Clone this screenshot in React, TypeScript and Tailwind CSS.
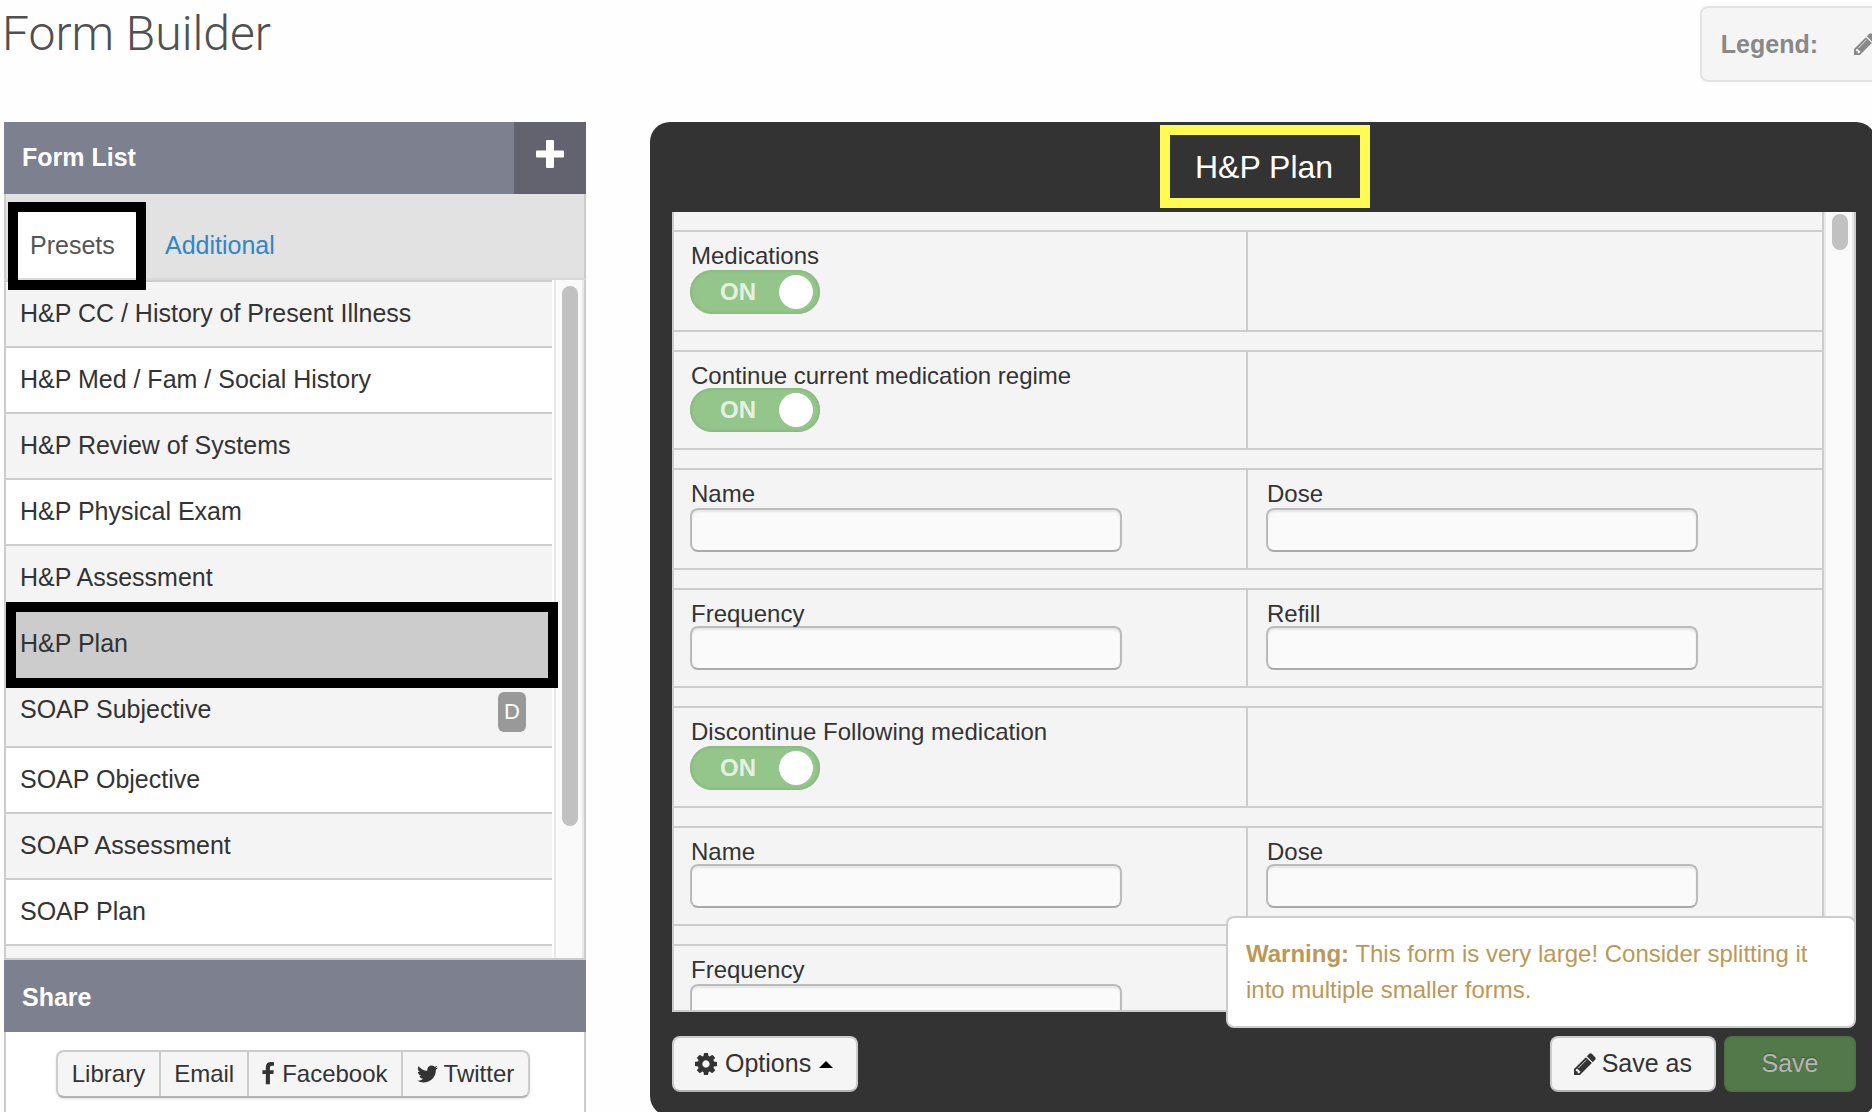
import React, { useId, useState } from "react";

type IconProps = { className?: string };

function PlusIcon({ className }: IconProps) {
  return (
    <svg viewBox="0 0 28 28" className={className} fill="currentColor" aria-hidden="true">
      <path d="M11 0h6a1 1 0 0 1 1 1v9.500H27a1 1 0 0 1 1 1v5a1 1 0 0 1-1 1h-9V27a1 1 0 0 1-1 1h-6a1 1 0 0 1-1-1v-9.500H1a1 1 0 0 1-1-1v-5a1 1 0 0 1 1-1h9V1a1 1 0 0 1 1-1z" />
    </svg>
  );
}

function CogIcon({ className }: IconProps) {
  return (
    <svg viewBox="0 0 1536 1792" className={className} fill="currentColor" aria-hidden="true">
      <path d="M1024 896q0-106-75-181t-181-75-181 75-75 181 75 181 181 75 181-75 75-181zm512-109v222q0 12-8 23t-20 13l-185 28q-19 54-39 91 35 50 107 138 10 12 10 25t-9 23q-27 37-99 108t-94 71q-12 0-26-9l-138-108q-44 23-91 38-16 136-29 186-7 28-36 28h-222q-14 0-24.500-8.500t-11.500-21.500l-28-184q-49-16-90-37l-141 107q-10 9-25 9-14 0-25-11-126-114-165-168-7-10-7-23 0-12 8-23 15-21 51-66.500t54-70.500q-27-50-41-99l-183-27q-13-2-21-12.500t-8-23.500v-222q0-12 8-23t19-13l186-28q14-46 39-92-40-57-107-138-10-12-10-24 0-10 9-23 26-36 98.500-107.500t94.500-71.500q13 0 26 10l138 107q44-23 91-38 16-136 29-186 7-28 36-28h222q14 0 24.500 8.500t11.500 21.500l28 184q49 16 90 37l142-107q9-9 24-9 13 0 25 10 129 119 165 170 7 8 7 22 0 12-8 23-15 21-51 66.500t-54 70.500q26 50 41 98l183 28q13 2 21 12.500t8 23.500z" />
    </svg>
  );
}

function PencilIcon({ className }: IconProps) {
  return (
    <svg viewBox="128 0 1536 1792" className={className} fill="currentColor" aria-hidden="true">
      <path d="M491 1536l91-91-235-235-91 91v107h128v128h107zm523-928q0-22-22-22-10 0-17 7l-542 542q-7 7-7 17 0 22 22 22 10 0 17-7l542-542q7-7 7-17zm-54-192l416 416-832 832h-416v-416zm683 96q0 53-37 90l-166 166-416-416 166-165q36-38 90-38 53 0 91 38l235 234q37 39 37 91z" />
    </svg>
  );
}

function FacebookIcon({ className }: IconProps) {
  return (
    <svg viewBox="448 0 896 1792" className={className} fill="currentColor" aria-hidden="true">
      <path d="M1343 12v264h-157q-86 0-116 36t-30 108v189h293l-39 296h-254v759h-306v-759h-255v-296h255v-218q0-186 104-288.500t277-102.500q147 0 228 12z" />
    </svg>
  );
}

function TwitterIcon({ className }: IconProps) {
  return (
    <svg viewBox="108 0 1577 1792" className={className} fill="currentColor" aria-hidden="true">
      <path d="M1684 408q-67 98-162 167 1 14 1 42 0 130-38 259.500t-115.500 248.500-184.500 210.500-258 146-323 54.500q-271 0-496-145 35 4 78 4 225 0 401-138-105-2-188-64.500t-114-159.500q33 5 61 5 43 0 85-11-112-23-185.500-111.500t-73.500-205.500v-4q68 38 146 41-66-44-105-115t-39-154q0-88 44-163 121 149 294.500 238.500t371.500 99.500q-8-38-8-74 0-134 94.500-228.500t228.500-94.500q140 0 236 102 109-21 205-78-37 115-142 178 93-10 186-50z" />
    </svg>
  );
}

const forms = [
  { name: "H&P CC / History of Present Illness" },
  { name: "H&P Med / Fam / Social History" },
  { name: "H&P Review of Systems" },
  { name: "H&P Physical Exam" },
  { name: "H&P Assessment" },
  { name: "H&P Plan" },
  { name: "SOAP Subjective", badge: "D" },
  { name: "SOAP Objective" },
  { name: "SOAP Assessment" },
  { name: "SOAP Plan" },
  { name: "" },
];

function FormList() {
  const selected = "H&P Plan";
  return (
    <div className="relative flex min-h-0 flex-1 overflow-hidden border-x-2 border-b-2 border-[#ccc] bg-white">
      <ul className="relative z-10 mr-0.5 min-w-0 flex-1">
        {forms.map((form) => (
          <li
            key={form.name}
            className={
              form.name === selected
                ? "relative z-10 border-t-2 border-[#ccc] bg-[#ccc]"
                : "relative border-t-2 border-[#ccc] odd:bg-[#f4f4f4]"
            }
          >
            <button type="button" className="flex w-full pl-3.5 text-left leading-[62px]">
              <span className="min-h-16 flex-1">{form.name}</span>
              {form.badge && (
                <span className="mt-3.5 mr-[26px] mb-3.5 h-10 w-7 rounded-md bg-[#999] text-center text-[22px] leading-10 text-white">
                  {form.badge}
                </span>
              )}
            </button>
            {form.name === selected && (
              <span className="pointer-events-none absolute -top-2.5 -right-1.5 -bottom-3 left-0 border-[10px] border-black" />
            )}
          </li>
        ))}
      </ul>
      <div className="w-[30px] border-x-2 border-[#e8e8e8] bg-[#fafafa] pt-1.5 pl-1.5">
        <div className="h-[540px] w-4 rounded-full bg-[#c1c1c1]" />
      </div>
    </div>
  );
}

function Sidebar() {
  return (
    <aside className="flex w-[582px] shrink-0 flex-col text-[25px] text-[#333]">
      <div className="flex h-[72px] shrink-0 bg-[#7d808f] text-white">
        <h2 className="flex-1 pl-[18px] font-bold leading-[70px]">Form List</h2>
        <button
          type="button"
          aria-label="Add form"
          className="flex w-[72px] justify-center bg-[#62636f] pt-[18px]"
        >
          <PlusIcon className="size-7" />
        </button>
      </div>

      <div className="relative z-20 flex h-[86px] shrink-0 items-end border-x-2 border-b-2 border-[#ccc] border-b-[#d9d9d9] bg-[#e2e2e2]">
        <div className="relative ml-2 h-[66px] w-[124px]">
          <button
            type="button"
            className="h-full w-full rounded-t-md bg-white pl-4 pt-0.5 text-left text-[#555]"
          >
            Presets
          </button>
          <span className="pointer-events-none absolute -top-2.5 -right-2 -bottom-3 -left-1.5 border-[10px] border-black" />
        </div>
        <button type="button" className="h-[66px] px-[27px] pt-0.5 text-[#3186c8]">
          Additional
        </button>
      </div>

      <FormList />

      <h2 className="h-[72px] shrink-0 bg-[#7d808f] pl-[18px] font-bold leading-[74px] text-white">
        Share
      </h2>
      <div className="flex h-20 shrink-0 items-start justify-center border-x-2 border-[#ccc] bg-white pt-[18px] pr-1">
        <div className="flex rounded-lg border-2 border-[#ccc] border-b-[#b3b3b3] bg-[#f5f5f5] text-2xl shadow-sm">
          <button type="button" className="flex h-11 items-center border-r-2 border-[#ccc] px-3.5">
            Library
          </button>
          <button type="button" className="flex h-11 items-center border-r-2 border-[#ccc] px-[13px]">
            Email
          </button>
          <button type="button" className="flex h-11 items-center gap-2 border-r-2 border-[#ccc] px-[13px]">
            <FacebookIcon className="h-6 w-3" />
            Facebook
          </button>
          <button type="button" className="flex h-11 items-center gap-1.5 px-3.5">
            <TwitterIcon className="h-6 w-[21px]" />
            Twitter
          </button>
        </div>
      </div>
    </aside>
  );
}

type Field = { kind: "toggle" | "text"; label: string };

const rows: Field[][] = [
  [{ kind: "toggle", label: "Medications" }],
  [{ kind: "toggle", label: "Continue current medication regime" }],
  [
    { kind: "text", label: "Name" },
    { kind: "text", label: "Dose" },
  ],
  [
    { kind: "text", label: "Frequency" },
    { kind: "text", label: "Refill" },
  ],
  [{ kind: "toggle", label: "Discontinue Following medication" }],
  [
    { kind: "text", label: "Name" },
    { kind: "text", label: "Dose" },
  ],
  [{ kind: "text", label: "Frequency" }],
];

function Toggle({ id }: { id: string }) {
  const [on, setOn] = useState(true);
  return (
    <span className="relative flex h-11 w-[130px] items-center justify-between rounded-full bg-[#94c58b] pr-[7px] pl-[30px] shadow-[inset_0_0_3px_1px_#84b37b]">
      <input
        id={id}
        type="checkbox"
        checked={on}
        onChange={() => setOn(!on)}
        className="absolute inset-0 z-10 cursor-pointer opacity-0"
      />
      <span className="font-bold text-[#e4f1e2]">{on ? "ON" : "OFF"}</span>
      <span className="size-[34px] rounded-full bg-white" />
    </span>
  );
}

function FieldCell({ field }: { field?: Field }) {
  const id = useId();
  return (
    <div className="pt-2 pl-4 last:border-l-2 last:border-[#ccc] last:pl-[18px]">
      {field && (
        <>
          <label
            htmlFor={id}
            className="block w-fit px-px leading-8 group-odd:h-[30px] group-even:h-7"
          >
            {field.label}
          </label>
          {field.kind === "toggle" ? (
            <Toggle id={id} />
          ) : (
            <input
              id={id}
              type="text"
              className="block h-11 w-[432px] max-w-full rounded-lg border-2 border-[#bbb] border-b-[#aaa] bg-[#fafafa] px-3 shadow-[inset_0_2px_2px_#e6e6e6]"
            />
          )}
        </>
      )}
    </div>
  );
}

function FormCanvas() {
  return (
    <div className="ml-[22px] mr-5 flex min-h-0 flex-1 overflow-hidden border-r-2 border-b-2 border-[#ccc]">
      <div className="flex min-w-0 flex-1 flex-col gap-[18px] border-x-2 border-[#ccc] bg-[#f4f4f4] pt-[18px] text-2xl text-[#333]">
        {rows.map((fields, i) => (
          <div
            key={i}
            className="group grid shrink-0 grid-cols-[minmax(0,1fr)_576px] border-y-2 border-[#ccc] odd:h-[102px] even:h-[100px]"
          >
            <FieldCell field={fields[0]} />
            <FieldCell field={fields[1]} />
          </div>
        ))}
      </div>
      <div className="w-[30px] border-x-2 border-[#e8e8e8] bg-[#fafafa] pt-0.5 pl-1.5">
        <div className="h-9 w-4 rounded-full bg-[#c1c1c1]" />
      </div>
    </div>
  );
}

function Editor() {
  return (
    <section className="-mr-1 -mb-1 flex min-w-0 flex-1 flex-col rounded-[20px] bg-[#333] text-[25px] text-[#333]">
      <div className="flex h-[90px] shrink-0 justify-center pt-[3px] pl-1">
        <h2 className="h-[83px] border-[10px] border-[#fffb53] pr-[27px] pl-[25px] text-[32px] leading-[64px] text-white">
          H&amp;P Plan
        </h2>
      </div>
      <FormCanvas />
      <div className="relative flex shrink-0 items-center gap-2 py-6 pr-5 pl-[22px]">
        <button
          type="button"
          className="mr-auto flex h-14 items-center gap-2 rounded-lg border-2 border-[#ccc] border-b-[#b3b3b3] bg-[#f5f5f5] pr-[23px] pl-[21px]"
        >
          <CogIcon className="h-[26px] w-[22px]" />
          Options
          <svg viewBox="0 0 14 7" className="h-[7px] w-3.5 fill-black" aria-hidden="true">
            <path d="M7 0l7 7H0z" />
          </svg>
        </button>
        <button
          type="button"
          className="flex h-14 items-center gap-1.5 rounded-lg border-2 border-[#ccc] border-b-[#b3b3b3] bg-[#f5f5f5] px-[22px]"
        >
          <PencilIcon className="h-[26px] w-[22px]" />
          Save as
        </button>
        <button
          type="button"
          disabled
          className="h-14 w-[132px] rounded-lg border-2 border-[#4c7343] bg-[#53794b] text-[#b5b5b5] text-shadow-[0_-1px_1px_#3f5c39]"
        >
          Save
        </button>
        <div
          role="alert"
          className="absolute right-5 bottom-[88px] w-[630px] rounded-lg border-2 border-[#ccc] bg-white p-[18px] text-2xl leading-9 text-[#bb9858]"
        >
          <strong>Warning:</strong> This form is very large! Consider splitting it into
          multiple smaller forms.
        </div>
      </div>
    </section>
  );
}

export default function App() {
  return (
    <div className="flex h-screen flex-col overflow-hidden bg-[#fefefe] font-['Liberation_Sans',sans-serif]">
      <header className="flex h-[122px] shrink-0 items-start justify-between pt-1.5 pl-0.5">
        <h1 className="font-['Roboto',sans-serif] text-5xl font-light leading-14 text-[#505050]">
          Form Builder
        </h1>
        <div className="-mr-1.5 flex h-[76px] items-center gap-9 rounded-l-lg border-2 border-[#e3e3e3] bg-[#f5f5f5] pl-[19px] text-[25px] font-bold text-[#888]">
          <span className="leading-8">Legend:</span>
          <PencilIcon className="h-[26px] w-[22px]" />
        </div>
      </header>
      <main className="flex min-h-0 flex-1 gap-16 pl-1">
        <Sidebar />
        <Editor />
      </main>
    </div>
  );
}
